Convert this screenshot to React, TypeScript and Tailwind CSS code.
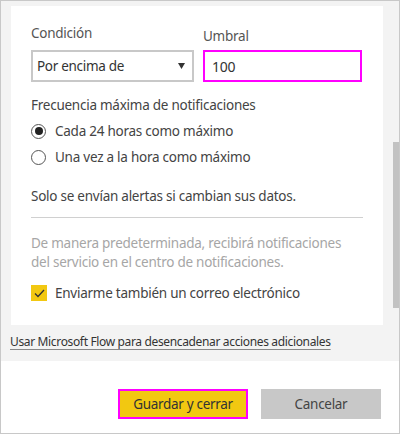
import React from "react";

const font = { fontFamily: '"Noto Sans", "Open Sans", sans-serif' };

export default function App() {
  return (
    <div
      className="w-[400px] h-[434px] border border-[#c8c8c8] bg-white flex flex-col overflow-hidden box-border"
      style={font}
    >
      <div className="relative h-[360px] bg-[#f3f3f3] flex flex-col">
        <div className="absolute right-[0px] top-[141px] w-[6px] h-[166px] bg-[#c2c2c2]" />
        <div className="ml-[10px] mt-[5px] w-[372px] h-[319px] bg-white pl-[20px] pr-[20px] pt-[17px] flex flex-col text-[#444] text-[13.5px] tracking-[-0.25px]">
          <div className="flex gap-[9px]">
            <div className="w-[163px] flex flex-col">
              <div className="h-[20px] leading-[20px] text-[#555]">Condición</div>
              <div className="mt-[7px] h-[32px] border-2 border-[#c8c8c8] flex items-center justify-between pl-[4px] pr-[7px] text-[13.5px] tracking-[-0.3px] text-[#333]">
                <span>Por encima de</span>
                <svg width="7" height="6" viewBox="0 0 7 6">
                  <path d="M0 0 L7 0 L3.5 6 Z" fill="#333" />
                </svg>
              </div>
            </div>
            <div className="w-[159px] flex flex-col">
              <div className="mt-[3px] h-[20px] leading-[20px] text-[#555]">Umbral</div>
              <div className="mt-[4px] h-[32px] border-2 border-[#ff00ff] flex items-center pl-[7px] text-[14px] tracking-[-0.3px] text-[#333]">
                100
              </div>
            </div>
          </div>
          <div className="mt-[13px] h-[20px] leading-[20px]">
            Frecuencia máxima de notificaciones
          </div>
          <div className="mt-[6px] h-[20px] flex items-center gap-[9px]">
            <span className="w-[15px] h-[15px] rounded-full border border-[#555] flex items-center justify-center">
              <span className="w-[8px] h-[8px] rounded-full bg-[#222]" />
            </span>
            <span>Cada 24 horas como máximo</span>
          </div>
          <div className="mt-[6px] h-[20px] flex items-center gap-[9px]">
            <span className="w-[15px] h-[15px] rounded-full border border-[#555]" />
            <span>Una vez a la hora como máximo</span>
          </div>
          <div className="mt-[19px] h-[20px] leading-[20px]">
            Solo se envían alertas si cambian sus datos.
          </div>
          <div className="mt-[11px] h-[1px] bg-[#d0d0d0]" />
          <div className="mt-[16px] leading-[19px] text-[#a6a6a6] whitespace-nowrap">
            De manera predeterminada, recibirá notificaciones
            <br />
            del servicio en el centro de notificaciones.
          </div>
          <div className="mt-[11px] h-[20px] flex items-center gap-[8px]">
            <span className="w-[16px] h-[16px] bg-[#f2c811] flex items-center justify-center">
              <svg width="11" height="9" viewBox="0 0 11 9">
                <path d="M1 4.5 L4 7.5 L10 1" fill="none" stroke="#333" strokeWidth="1.3" />
              </svg>
            </span>
            <span>Enviarme también un correo electrónico</span>
          </div>
        </div>
        <div className="mt-[7px] pl-[9px] h-[20px] leading-[20px] text-[12px] tracking-[-0.35px] text-[#333]">
          <span className="underline decoration-[#888] underline-offset-[3px]">
            Usar Microsoft Flow para desencadenar acciones adicionales
          </span>
        </div>
      </div>
      <div className="flex justify-end gap-[13px] pr-[18px] mt-[28px] text-[13.5px] tracking-[-0.3px]">
        <div className="w-[130px] h-[30px] bg-[#f2c811] border-2 border-[#ff00ff] flex items-center justify-center text-[#333]">
          Guardar y cerrar
        </div>
        <div className="w-[120px] h-[30px] bg-[#c8c8c8] flex items-center justify-center text-[#444]">
          Cancelar
        </div>
      </div>
    </div>
  );
}
